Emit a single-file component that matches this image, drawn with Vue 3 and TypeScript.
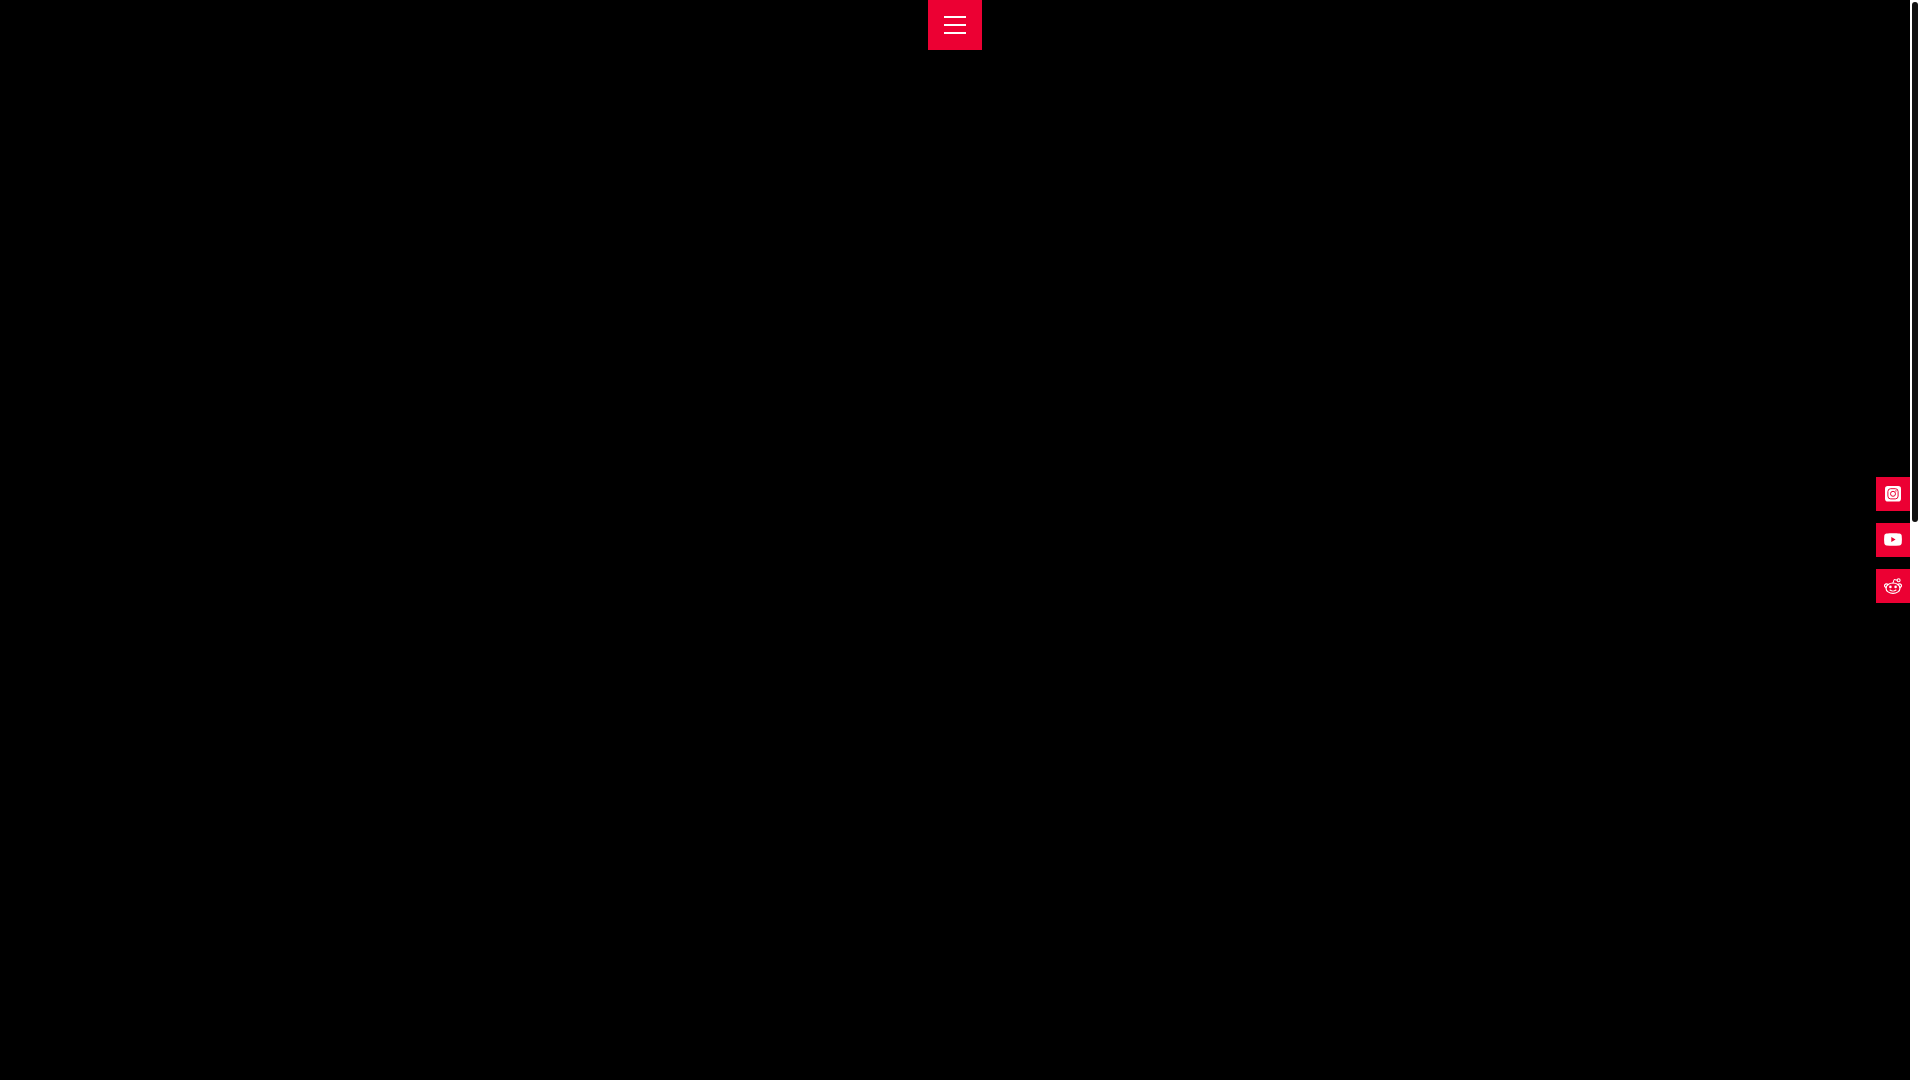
<script setup lang="ts">
import { ref } from 'vue'

const menuOpen = ref(false)
</script>

<template>
  <div class="page">
    <main class="stage">
      <button
        class="menu"
        type="button"
        aria-label="Menu"
        :aria-expanded="menuOpen"
        @click="menuOpen = !menuOpen"
      >
        <span class="bar"></span>
        <span class="bar"></span>
        <span class="bar"></span>
      </button>
      <nav class="social" aria-label="Social media">
        <a class="link" href="#instagram" aria-label="Instagram">
          <svg viewBox="0 0 18 18" aria-hidden="true">
            <rect x="1" y="1" width="16" height="15.6" rx="2.8" fill="#fff" />
            <rect x="3.9" y="3.7" width="10.200" height="10.200" rx="2.8" fill="none" stroke="#ec0033" stroke-width="1" />
            <circle cx="9" cy="8.800" r="2.500" fill="none" stroke="#ec0033" stroke-width="1" />
            <circle cx="11.900" cy="5.900" r="0.700" fill="#ec0033" />
          </svg>
        </a>
        <a class="link" href="#youtube" aria-label="YouTube">
          <svg viewBox="0 0 18 18" aria-hidden="true">
            <path
              fill="#fff"
              fill-rule="evenodd"
              d="M9 2.300c2.600 0 4.800.1 6.400.3 1.300.2 2.100.9 2.300 2.200.3 2.500.3 5 0 7.500-.2 1.300-1 2-2.300 2.200-4.200.4-8.600.4-12.800 0C1.300 14.300.5 13.600.3 12.300 0 9.800 0 7.300.3 4.800.5 3.500 1.300 2.800 2.600 2.600 4.200 2.400 6.400 2.300 9 2.300ZM7.300 6.100v4.900L11.600 8.550Z"
            />
          </svg>
        </a>
        <a class="link" href="#reddit" aria-label="Reddit">
          <svg viewBox="0 0 18 18" aria-hidden="true" fill="none" stroke="#fff" stroke-linecap="round" stroke-linejoin="round">
            <ellipse cx="9" cy="11.200" rx="7" ry="5.200" stroke-width="1.200" />
            <path d="M2.200 10.700C.6 10.100.1 8.700.9 7.600c.8-1 2.300-.9 3.100.1M15.800 10.700c1.600-.6 2.100-2 1.300-3.100-.8-1-2.300-.9-3.100.1" stroke-width="1.200" />
            <path d="M9 6 10.100 2.500 13.200 3.200" stroke-width="1" />
            <circle cx="14.600" cy="3.300" r="1.500" stroke-width="1.100" />
            <circle cx="6.400" cy="9.900" r="1.300" fill="#fff" stroke="none" />
            <circle cx="11.600" cy="9.900" r="1.300" fill="#fff" stroke="none" />
            <path d="M6 13c1.600 1.300 4.400 1.300 6 0" stroke-width="1.100" />
          </svg>
        </a>
      </nav>
    </main>
    <div class="track" aria-hidden="true">
      <div class="thumb"></div>
    </div>
  </div>
</template>

<style>
body {
  background: #000;
}
</style>

<style scoped>
.page {
  display: flex;
  min-height: 100vh;
}

.stage {
  flex: 1;
  display: grid;
  position: relative;
  background: #000;
}

.menu {
  display: flex;
  flex-direction: column;
  align-items: center;
  justify-content: center;
  gap: 6px;
  justify-self: center;
  align-self: start;
  width: 54px;
  height: 50px;
  padding: 0;
  border: 0;
  background: #ec0033;
  cursor: pointer;
}

.bar {
  width: 22px;
  height: 2px;
  background: #fff;
}

/* Floats at the right edge, centred over the page */
.social {
  position: absolute;
  top: 0;
  right: 0;
  bottom: 0;
  display: flex;
  flex-direction: column;
  justify-content: center;
  gap: 12px;
}

.link {
  display: flex;
  align-items: center;
  justify-content: center;
  width: 34px;
  height: 34px;
  background: #ec0033;
}

.link svg {
  width: 18px;
  height: 18px;
}

.track {
  width: 10px;
  padding: 2px;
  box-sizing: border-box;
  height: 100vh;
  background: #fff;
}

.thumb {
  height: 48.3%;
  border-radius: 3px;
  background: #111;
}
</style>
